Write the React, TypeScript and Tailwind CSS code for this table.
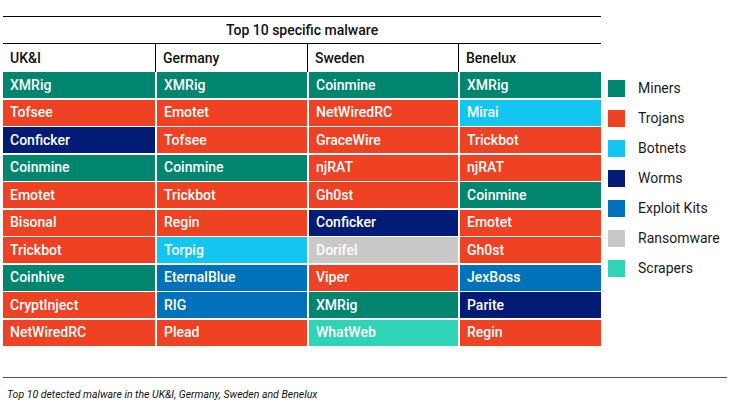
const COLORS: Record<string, string> = {
  G: "bg-[#00856f]",
  R: "bg-[#ef4123]",
  N: "bg-[#021b74]",
  C: "bg-[#13c6ef]",
  B: "bg-[#0071bb]",
  S: "bg-[#c8c8c8]",
  T: "bg-[#2fd3b6]",
};

const columns = [
  { name: "UK&I", width: "w-[152px]" },
  { name: "Germany", width: "w-[152px]" },
  { name: "Sweden", width: "w-[151px]" },
  { name: "Benelux", width: "w-[143px]" },
];

const rows: [string, string][][] = [
  [["XMRig", "G"], ["XMRig", "G"], ["Coinmine", "G"], ["XMRig", "G"]],
  [["Tofsee", "R"], ["Emotet", "R"], ["NetWiredRC", "R"], ["Mirai", "C"]],
  [["Conficker", "N"], ["Tofsee", "R"], ["GraceWire", "R"], ["Trickbot", "R"]],
  [["Coinmine", "G"], ["Coinmine", "G"], ["njRAT", "R"], ["njRAT", "R"]],
  [["Emotet", "R"], ["Trickbot", "R"], ["Gh0st", "R"], ["Coinmine", "G"]],
  [["Bisonal", "R"], ["Regin", "R"], ["Conficker", "N"], ["Emotet", "R"]],
  [["Trickbot", "R"], ["Torpig", "C"], ["Dorifel", "S"], ["Gh0st", "R"]],
  [["Coinhive", "G"], ["EternalBlue", "B"], ["Viper", "R"], ["JexBoss", "B"]],
  [["CryptInject", "R"], ["RIG", "B"], ["XMRig", "G"], ["Parite", "N"]],
  [["NetWiredRC", "R"], ["Plead", "R"], ["WhatWeb", "T"], ["Regin", "R"]],
];

const legend: [string, string][] = [
  ["Miners", "G"],
  ["Trojans", "R"],
  ["Botnets", "C"],
  ["Worms", "N"],
  ["Exploit Kits", "B"],
  ["Ransomware", "S"],
  ["Scrapers", "T"],
];

export default function App() {
  return (
    <div className="w-[740px] h-[411px] bg-white font-['Roboto',sans-serif] text-[#111] overflow-hidden">
      <div className="flex pl-[3px] pt-[16px]">
        {/* Table */}
        <div className="w-[598px] shrink-0">
          <div className="h-[28px] border-y border-black flex items-center justify-center text-[14px] font-medium">
            Top 10 specific malware
          </div>
          <div className="flex h-[28px]">
            {columns.map((c, i) => (
              <div
                key={c.name}
                className={`${c.width} flex items-center pl-[7px] text-[14px] font-medium ${
                  i > 0 ? "border-l border-black" : ""
                }`}
              >
                {c.name}
              </div>
            ))}
          </div>
          <div className="flex flex-col gap-[1.5px]">
            {rows.map((row, r) => (
              <div key={r} className="flex h-[26px]">
                {row.map(([label, k], i) => (
                  <div
                    key={i}
                    className={`${columns[i].width} ${COLORS[k]} ${
                      i > 0 ? "border-l-2 border-white" : ""
                    } flex items-center pl-[7px] text-[14px] font-medium text-white`}
                  >
                    {label}
                  </div>
                ))}
              </div>
            ))}
          </div>
        </div>

        {/* Legend */}
        <ul className="ml-[7px] mt-[64px] flex flex-col gap-[13px]">
          {legend.map(([label, k]) => (
            <li key={label} className="flex items-center h-[17px]">
              <span className={`w-[17px] h-[17px] ${COLORS[k]}`} />
              <span className="ml-[13px] text-[14px] text-[#1a1a1a]">{label}</span>
            </li>
          ))}
        </ul>
      </div>

      <div className="ml-[3px] mt-[31px] w-[724px] border-t border-[#555]" />
      <p className="ml-[7px] mt-[9px] text-[10.5px] italic text-[#111]">
        Top 10 detected malware in the UK&amp;I, Germany, Sweden and Benelux
      </p>
    </div>
  );
}
